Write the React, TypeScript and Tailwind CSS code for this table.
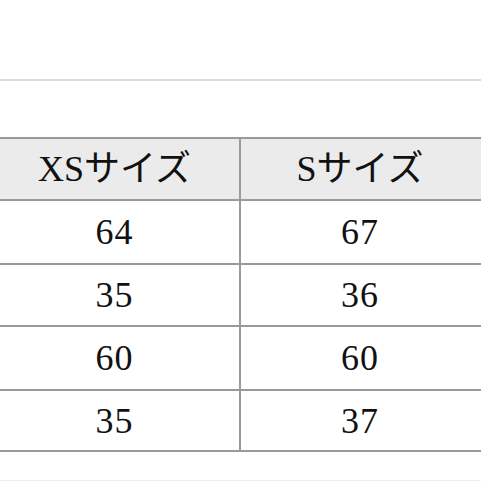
import React from 'react';

const rows = [
  { xs: '64', s: '67', h: 'h-[64px]' },
  { xs: '35', s: '36', h: 'h-[62px]' },
  { xs: '60', s: '60', h: 'h-[64px]' },
  { xs: '35', s: '37', h: 'h-[61px]' },
];

export default function App() {
  return (
    <div
      className="w-[481px] h-[481px] overflow-hidden bg-white flex flex-col text-[#111]"
      style={{ fontFamily: '"Liberation Serif", "Noto Sans CJK JP", serif' }}
    >
      {/* top divider */}
      <div className="mt-[79px] h-[2px] bg-[#dcdcdc]" />

      {/* size table */}
      <div className="mt-[56px] -ml-[10px] w-[510px] border-t-2 border-[#9a9a9a] text-[36px] leading-none">
        <div className="flex h-[62px] border-b-2 border-[#9a9a9a] bg-[#ebebeb]">
          <div className="w-[251px] flex items-center justify-center border-r-2 border-[#9a9a9a]">
            XSサイズ
          </div>
          <div className="w-[238px] flex items-center justify-center">Sサイズ</div>
        </div>
        {rows.map((r, i) => (
          <div key={i} className={`flex border-b-2 border-[#9a9a9a] ${r.h}`}>
            <div className="w-[251px] flex items-center justify-center border-r-2 border-[#9a9a9a] tracking-[1px]">
              {r.xs}
            </div>
            <div className="w-[238px] flex items-center justify-center tracking-[1px]">{r.s}</div>
          </div>
        ))}
      </div>

      <div className="flex-1" />
      <div className="h-px bg-[#eeeeee]" />
    </div>
  );
}
